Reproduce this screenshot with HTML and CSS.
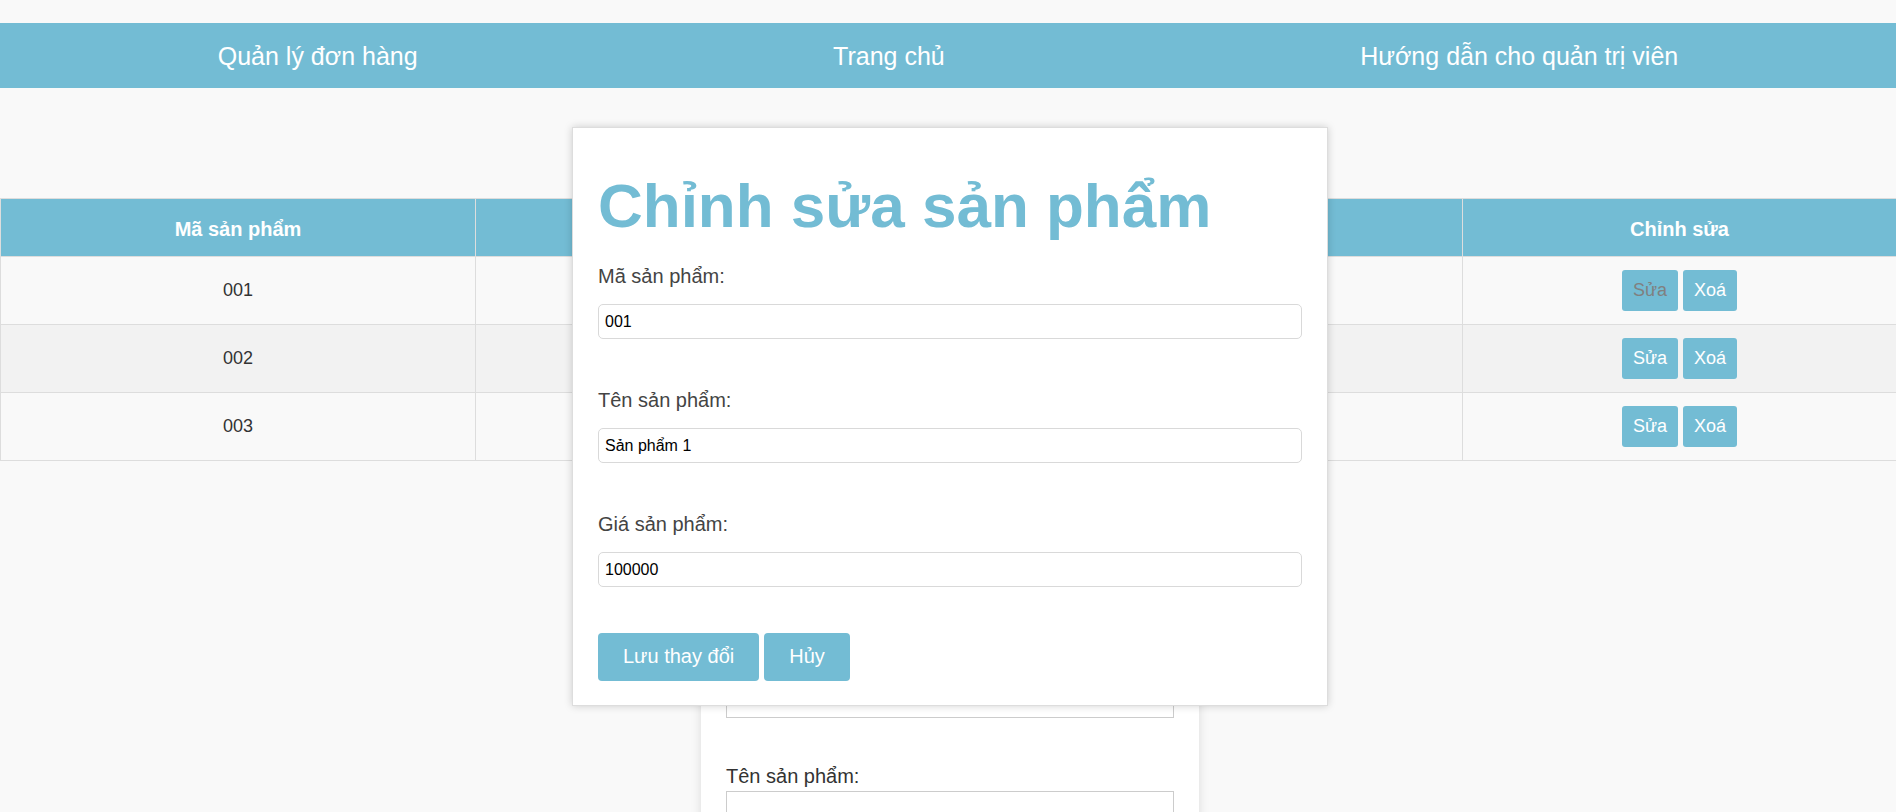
FILE: index.html
```html
<!DOCTYPE html>
<html lang="vi">
<head>
<meta charset="utf-8">
<title>Quản lý sản phẩm</title>
<link rel="stylesheet" href="styles.css">
</head>
<body>
<nav class="topnav">
  <a class="nav-link" href="#">Quản lý đơn hàng</a>
  <a class="nav-link" href="#">Trang chủ</a>
  <a class="nav-link" href="#">Hướng dẫn cho quản trị viên</a>
</nav>

<main class="content">
  <table class="product-table">
    <colgroup>
      <col class="col-id">
      <col class="col-name">
      <col class="col-price">
      <col class="col-edit">
    </colgroup>
    <thead>
      <tr class="head-row"><th>Mã sản phẩm</th><th>Tên sản phẩm</th><th>Giá sản phẩm</th><th>Chỉnh sửa</th></tr>
    </thead>
    <tbody>
      <tr class="body-row"><td>001</td><td>Sản phẩm 1</td><td>100000</td><td><button class="btn-sm btn-muted">Sửa</button> <button class="btn-sm">Xoá</button></td></tr>
      <tr class="body-row alt"><td>002</td><td>Sản phẩm 2</td><td>200000</td><td><button class="btn-sm">Sửa</button> <button class="btn-sm">Xoá</button></td></tr>
      <tr class="body-row"><td>003</td><td>Sản phẩm 3</td><td>300000</td><td><button class="btn-sm">Sửa</button> <button class="btn-sm">Xoá</button></td></tr>
    </tbody>
  </table>

  <section class="add-card">
    <h2 class="add-title">Thêm sản phẩm</h2>
    <label class="add-label">Mã sản phẩm:</label>
    <input class="add-input" type="text">
    <label class="add-label add-label-next">Tên sản phẩm:</label>
    <input class="add-input" type="text">
    <label class="add-label add-label-next">Giá sản phẩm:</label>
    <input class="add-input" type="text">
  </section>
</main>

<div class="modal">
  <h1 class="modal-title">Chỉnh sửa sản phẩm</h1>
  <label class="field-label">Mã sản phẩm:</label>
  <input class="field-input" type="text" value="001">
  <label class="field-label field-next">Tên sản phẩm:</label>
  <input class="field-input" type="text" value="Sản phẩm 1">
  <label class="field-label field-next">Giá sản phẩm:</label>
  <input class="field-input" type="text" value="100000">
  <div class="modal-actions">
    <button class="btn">Lưu thay đổi</button>
    <button class="btn">Hủy</button>
  </div>
</div>
</body>
</html>
```

FILE: styles.css
```css
* { box-sizing: border-box; }

html, body {
  margin: 0;
  padding: 0;
}

body {
  background: #f9f9f9;
  font-family: "Liberation Sans", Arial, sans-serif;
  color: #333;
  padding-top: 23px;
  height: 812px;
  overflow: hidden;
}

.topnav {
  display: flex;
  justify-content: space-around;
  align-items: center;
  height: 65px;
  padding: 2px 10px 0;
  background: #73bcd4;
}

.nav-link {
  color: #fff;
  text-decoration: none;
  font-size: 25px;
}

.content {
  padding-top: 110px;
}

.product-table {
  width: 100%;
  border-collapse: collapse;
  table-layout: fixed;
  border: 1px solid #ddd;
}

.col-id { width: 475px; }
.col-name { width: 494px; }
.col-price { width: 493px; }
.col-edit { width: 434px; }

.head-row { height: 58px; }
.body-row { height: 68px; }

.product-table th {
  background: #73bcd4;
  color: #fff;
  font-weight: bold;
  font-size: 20px;
  line-height: 23px;
  padding: 18px 8px 15px;
  border: 1px solid #ddd;
  text-align: center;
  vertical-align: middle;
}

.product-table td {
  font-size: 18px;
  line-height: 21px;
  padding: 12px 8px;
  border: 1px solid #ddd;
  text-align: center;
  vertical-align: middle;
  color: #333;
  background: #f9f9f9;
}

.product-table tr.alt td {
  background: #f2f2f2;
}

.btn-sm {
  font-family: "Liberation Sans", Arial, sans-serif;
  font-size: 18px;
  line-height: 21px;
  padding: 10px 11px;
  border: none;
  border-radius: 3px;
  background: #73bcd4;
  color: #fff;
  vertical-align: middle;
}

.btn-muted {
  color: #808080;
}

.add-card {
  width: 498px;
  margin: 118px 0 0 calc(50% - 247px);
  background: #fff;
  padding: 25px;
  box-shadow: 0 0 10px rgba(0, 0, 0, 0.12);
  height: 400px;
}

.add-title {
  margin: 0 0 20px;
  font-size: 28px;
  line-height: 32px;
  color: #73bcd4;
}

.add-label {
  display: block;
  font-size: 20px;
  line-height: 23px;
  color: #333;
  margin-bottom: 3px;
}

.add-label-next {
  margin-top: 47px;
}

.add-input {
  display: block;
  width: 100%;
  height: 36px;
  border: 1px solid #ccc;
  background: #fff;
}

.modal {
  position: absolute;
  top: 127px;
  left: 50%;
  margin-left: -376px;
  width: 756px;
  background: #fff;
  border: 1px solid #ddd;
  box-shadow: 0 0 8px rgba(0, 0, 0, 0.18);
  padding: 0 25px 24px;
}

.modal-title {
  margin: 42px 0 24px;
  font-size: 62px;
  line-height: 71px;
  font-weight: bold;
  color: #73bcd4;
}

.field-label {
  display: block;
  font-size: 20px;
  line-height: 23px;
  color: #444;
  margin-bottom: 16px;
}

.field-next {
  margin-top: 50px;
}

.field-input {
  display: block;
  width: 100%;
  height: 35px;
  padding: 0 6px;
  font-family: "Liberation Sans", Arial, sans-serif;
  font-size: 16px;
  color: #000;
  border: 1px solid #d9d9d9;
  border-radius: 5px;
  background: #fff;
}

.modal-actions {
  display: flex;
  gap: 5px;
  margin-top: 46px;
}

.btn {
  font-family: "Liberation Sans", Arial, sans-serif;
  font-size: 20px;
  line-height: 23px;
  padding: 12px 25px 13px;
  border: none;
  border-radius: 4px;
  background: #73bcd4;
  color: #fff;
}
```
